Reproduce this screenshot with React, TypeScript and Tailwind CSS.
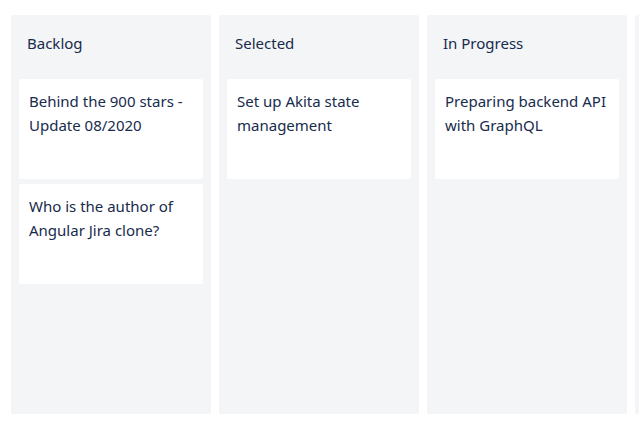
import React from "react";

const columns = [
  { title: "Backlog", cards: ["Behind the 900 stars - Update 08/2020", "Who is the author of Angular Jira clone?"] },
  { title: "Selected", cards: ["Set up Akita state management"] },
  { title: "In Progress", cards: ["Preparing backend API with GraphQL"] },
  { title: "", cards: [] as string[] },
];

export default function App() {
  return (
    <div
      className="w-[639px] h-[428px] overflow-hidden bg-white text-[#172b4d]"
      style={{ fontFamily: '"Noto Sans", "Open Sans", sans-serif' }}
    >
      <div className="flex gap-2 pl-[11px] pt-[15px]">
        {columns.map((col, i) => (
          <div key={i} className="w-[200px] h-[399px] shrink-0 rounded-[2px] bg-[#f4f5f7] px-2">
            <div className="pl-2 pt-[16px] h-[64px] text-[15px] leading-[24px]">{col.title}</div>
            <div className="flex flex-col gap-[5px]">
              {col.cards.map((c) => (
                <div key={c} className="h-[100px] rounded-[2px] bg-white px-[10px] pt-[10px] text-[15px] leading-[24px]">
                  {c}
                </div>
              ))}
            </div>
          </div>
        ))}
      </div>
    </div>
  );
}
